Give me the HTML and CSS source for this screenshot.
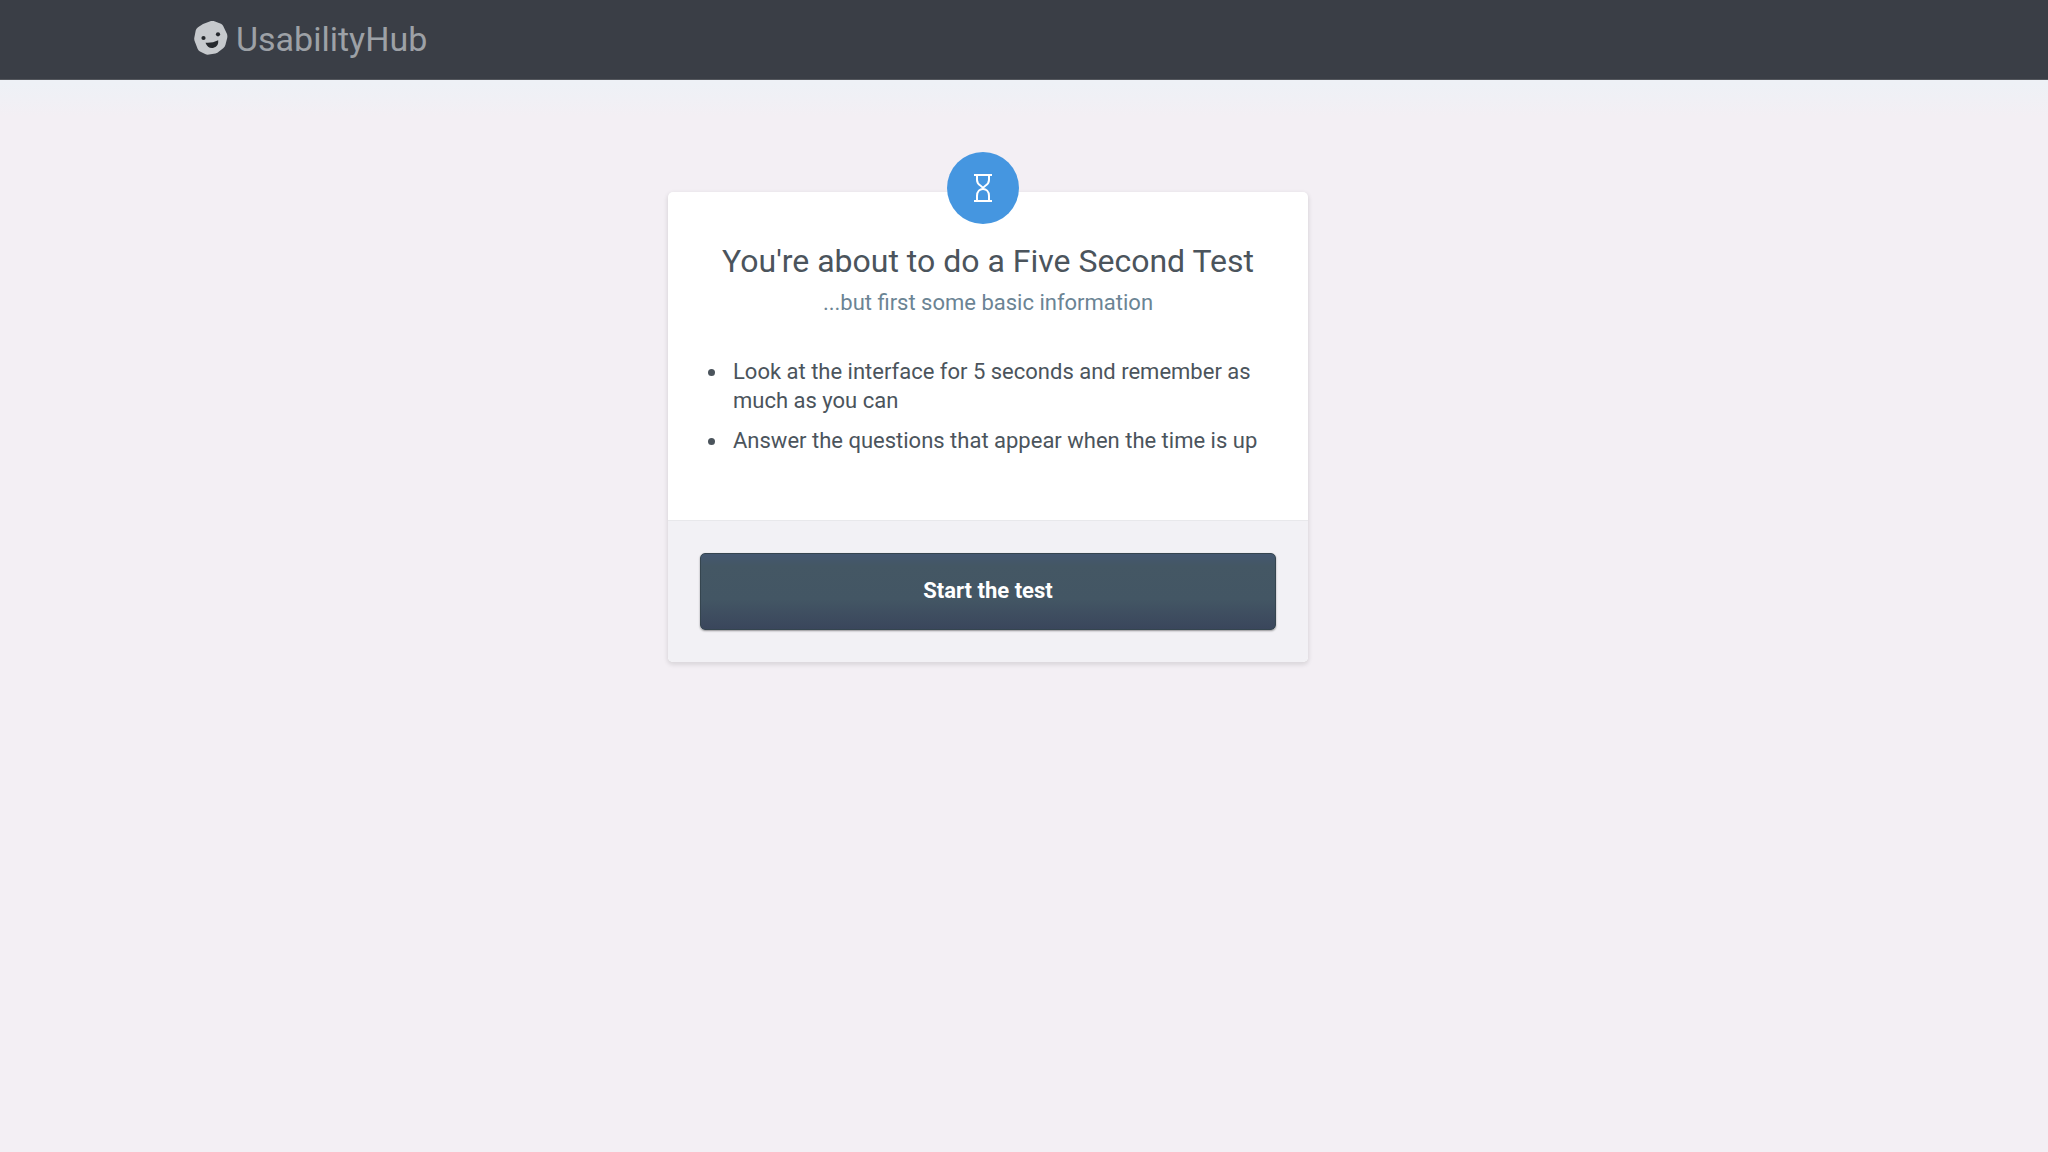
FILE: index.html
```html
<!DOCTYPE html>
<html lang="en">
<head>
<meta charset="utf-8">
<meta name="viewport" content="width=device-width, initial-scale=1">
<title>UsabilityHub</title>
<link rel="stylesheet" href="styles.css">
</head>
<body>
<header class="topbar">
  <a class="brand" href="#">
    <svg class="brand-mark" viewBox="0 0 34 34" aria-hidden="true">
      <path class="face" d="M9 3 17 0q2-.4 4 .4l6 2.400q1.500.7 2.200 2.200L33 13q.6 2 .2 4l-1.800 7q-.5 2-2.200 3.200L25 30.500q-1.500 1.500-3.500 1.900L15 33.600q-2 .4-3.900-.5L6 30.600Q4.500 29.500 3.700 28L.8 20.500Q0 18.600.3 16.700L1.700 9.500Q2.200 7.500 4 6.200Z"/>
      <circle class="feature" cx="9.500" cy="17" r="2.100"/>
      <circle class="feature" cx="24" cy="13.300" r="2.100"/>
      <path class="feature" d="M11.500 21.700q6.500.7 12.700-2.500.7 6-4.600 7.600-5.700 1.200-8.100-5.100Z"/>
    </svg>
    <span class="brand-name">UsabilityHub</span>
  </a>
</header>
<main class="page">
  <section class="card">
    <div class="badge">
      <svg class="hourglass" viewBox="0 0 20 30" aria-hidden="true">
        <path d="M1 2h18M1 28h18M4 2v5c0 5 4 5 6 8 2-3 6-3 6-8V2M4 28v-5c0-5 3-7 6-7s6 2 6 7v5"/>
      </svg>
    </div>
    <div class="card-body">
      <h1 class="title">You're about to do a Five Second Test</h1>
      <p class="subtitle">...but first some basic information</p>
      <ul class="steps">
        <li>Look at the interface for 5 seconds and remember as much as you can</li>
        <li>Answer the questions that appear when the time is up</li>
      </ul>
    </div>
    <div class="card-footer">
      <button class="start" type="button">Start the test</button>
    </div>
  </section>
</main>
</body>
</html>
```
FILE: styles.css
```css
* {
  box-sizing: border-box;
}

body {
  margin: 0;
  min-height: 100vh;
  background: linear-gradient(#eef1f6 84px, #f3eff4 116px) no-repeat #f3eff4;
  color: #4b545c;
  font-family: Roboto, "Liberation Sans", sans-serif;
}

.topbar {
  display: flex;
  align-items: center;
  height: 80px;
  padding: 0 194px 4px;
  background: #3a3e46;
  border-bottom: 1px solid #54575d;
}

.brand {
  display: flex;
  align-items: center;
  gap: 8px;
  color: #9da1a6;
  text-decoration: none;
}

.brand-mark {
  width: 34px;
  height: 34px;
}

.face {
  fill: #c6c9cd;
}

.feature {
  fill: #25282d;
}

.brand-name {
  padding-top: 2px;
  font-size: 34px;
  font-weight: 400;
  line-height: 40px;
}

.page {
  padding: 112px 72px 64px 0;
}

.card {
  position: relative;
  max-width: 640px;
  margin: 0 auto;
  background: #fff;
  border-radius: 5px;
  box-shadow: 0 2px 4px 1px rgba(0, 0, 0, 0.1);
}

.badge {
  position: absolute;
  top: -40px;
  left: calc(50% - 41px);
  display: flex;
  align-items: center;
  justify-content: center;
  width: 72px;
  height: 72px;
  border-radius: 50%;
  background: #4596e0;
}

.hourglass {
  width: 20px;
  height: 30px;
  fill: none;
  stroke: #fff;
  stroke-width: 2;
}

.card-body {
  padding: 49px 32px 65px;
}

.title {
  margin: 0;
  font-size: 32px;
  font-weight: 400;
  line-height: 40px;
  text-align: center;
}

.subtitle {
  margin: 8px 0 0;
  color: #6b8494;
  font-size: 22px;
  line-height: 28px;
  text-align: center;
}

.steps {
  margin: 40px 0 0;
  padding-left: 28px;
  font-size: 22px;
  line-height: 29px;
}

.steps li {
  padding-left: 5px;
}

.steps li + li {
  margin-top: 11px;
}

.card-footer {
  padding: 32px;
  background: #f2f1f5;
  border-top: 1px solid #e8e8eb;
  border-radius: 0 0 5px 5px;
}

.start {
  display: block;
  width: 100%;
  height: 77px;
  padding: 0 16px 2px;
  border: 1px solid #35454f;
  border-radius: 5px;
  background: linear-gradient(#445770, #445764 16%, #435664 60%, #3a465c);
  box-shadow: 0 1px 2px rgba(0, 0, 0, 0.4);
  color: #fff;
  font-family: inherit;
  font-size: 22px;
  font-weight: 700;
  line-height: 28px;
}
```
